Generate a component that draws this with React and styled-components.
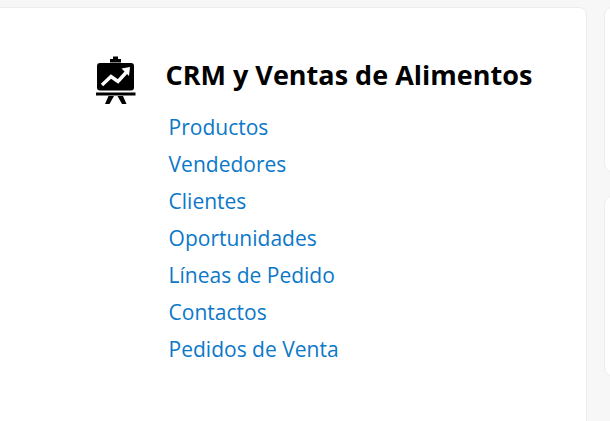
import React from "react";
import styled, { createGlobalStyle } from "styled-components";

const Global = createGlobalStyle`
  html, body { margin: 0; padding: 0; background: #f7f7f7; overflow: hidden; }
  body { font-family: "Open Sans", "Noto Sans", sans-serif; }
`;

const Page = styled.div`
  width: 610px;
  height: 421px;
  display: grid;
  grid-template-columns: 587px 1fr;
  column-gap: 17px;
  padding-top: 7px;
  box-sizing: border-box;
  overflow: hidden;
`;

const Card = styled.main`
  height: 440px;
  margin-left: -10px;
  background: #fff;
  border: 1px solid #ececec;
  border-radius: 8px;
  box-sizing: border-box;
  padding: 37px 0 0 105px;
  display: flex;
  gap: 30px;
`;

const IconSlot = styled.div`
  width: 40px;
  padding-top: 11px;
  flex: none;
`;

const Body = styled.section`
  display: flex;
  flex-direction: column;
`;

const Title = styled.h2`
  margin: 0 0 0 -0.5px;
  font-size: 27px;
  line-height: 60px;
  font-weight: 700;
  color: #000;
  white-space: nowrap;
`;

const Links = styled.ul`
  list-style: none;
  margin: 4px 0 0;
  padding: 0 0 0 2.6px;
`;

const LinkItem = styled.li`
  font-size: 21px;
  line-height: 37px;
`;

const Anchor = styled.a`
  color: #0b78c8;
  text-decoration: none;
`;

const Side = styled.aside`
  display: flex;
  flex-direction: column;
  gap: 24px;
`;

const SidePanel = styled.div`
  height: ${(p) => p.$h}px;
  width: 40px;
  background: #fff;
  border: 1px solid #ececec;
  border-radius: 8px;
  box-sizing: border-box;
`;

const ChartIcon = () => (
  <svg width="40" height="48" viewBox="0 0 40 48" aria-hidden="true">
    <rect x="17" y="0.5" width="5" height="3" fill="#000" />
    <rect x="14" y="3" width="11" height="3.5" fill="#000" />
    <rect x="1" y="7" width="37" height="27.5" rx="3" fill="#000" />
    <path
      d="M6 29 L15 20.5 L22 25.5 L31 15.5"
      fill="none"
      stroke="#fff"
      strokeWidth="3.4"
    />
    <path d="M25.5 12.5 L34 11 L33 20 Z" fill="#fff" />
    <rect x="0" y="36.5" width="39.5" height="3" fill="#000" />
    <path d="M12.5 40 L18 40 L13.5 48 L9 48 Z" fill="#000" />
    <path d="M21.5 40 L27 40 L30.5 48 L26 48 Z" fill="#000" />
  </svg>
);

const items = [
  "Productos",
  "Vendedores",
  "Clientes",
  "Oportunidades",
  "Líneas de Pedido",
  "Contactos",
  "Pedidos de Venta",
];

export default function App() {
  return (
    <>
      <Global />
      <Page>
        <Card>
          <IconSlot>
            <ChartIcon />
          </IconSlot>
          <Body>
            <Title>CRM y Ventas de Alimentos</Title>
            <Links>
              {items.map((t) => (
                <LinkItem key={t}>
                  <Anchor href="#">{t}</Anchor>
                </LinkItem>
              ))}
            </Links>
          </Body>
        </Card>
        <Side>
          <SidePanel $h={165} />
          <SidePanel $h={180} />
        </Side>
      </Page>
    </>
  );
}
